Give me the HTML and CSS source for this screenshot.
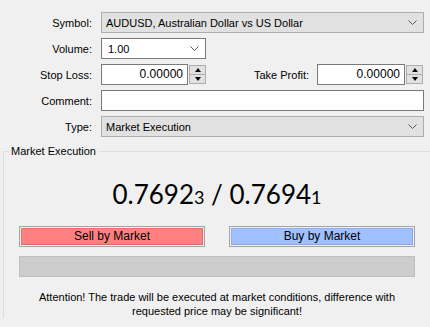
FILE: index.html
```html
<!DOCTYPE html>
<html lang="en">
<head>
  <meta charset="UTF-8">
  <title>Order</title>
  <link rel="stylesheet" href="styles.css">
</head>
<body>
  <form class="order">
    <!-- Campos de la orden -->
    <div class="row">
      <label class="lbl">Symbol:</label>
      <div class="select full">
        <span>AUDUSD, Australian Dollar vs US Dollar</span>
        <svg class="chev" width="9" height="5" viewBox="0 0 9 5"><path d="M0.5 0.5 L4.5 4.5 L8.5 0.5" fill="none" stroke="#555" stroke-width="1"/></svg>
      </div>
    </div>
    <div class="row">
      <label class="lbl">Volume:</label>
      <div class="select white vol">
        <span>1.00</span>
        <svg class="chev" width="9" height="5" viewBox="0 0 9 5"><path d="M0.5 0.5 L4.5 4.5 L8.5 0.5" fill="none" stroke="#555" stroke-width="1"/></svg>
      </div>
    </div>
    <div class="row">
      <label class="lbl">Stop Loss:</label>
      <div class="num sl">
        <div class="field">0.00000</div>
        <div class="spin"><span class="up"></span><span class="down"></span></div>
      </div>
      <label class="lbl tp-lbl">Take Profit:</label>
      <div class="num tp">
        <div class="field">0.00000</div>
        <div class="spin"><span class="up"></span><span class="down"></span></div>
      </div>
    </div>
    <div class="row">
      <label class="lbl">Comment:</label>
      <div class="field text"></div>
    </div>
    <div class="row">
      <label class="lbl">Type:</label>
      <div class="select full">
        <span>Market Execution</span>
        <svg class="chev" width="9" height="5" viewBox="0 0 9 5"><path d="M0.5 0.5 L4.5 4.5 L8.5 0.5" fill="none" stroke="#555" stroke-width="1"/></svg>
      </div>
    </div>

    <!-- Grupo de ejecucion -->
    <fieldset class="group">
      <legend>Market Execution</legend>
      <div class="prices">0.7692<small>3</small> / 0.7694<small>1</small></div>
      <div class="buttons">
        <button type="button" class="btn sell"><span>Sell by Market</span></button>
        <button type="button" class="btn buy"><span>Buy by Market</span></button>
      </div>
      <div class="bar"></div>
      <p class="note">Attention! The trade will be executed at market conditions, difference with<br>requested price may be significant!</p>
    </fieldset>
  </form>
</body>
</html>
```

FILE: styles.css
```css
/* Estilos generales */
body {
  margin: 0;
  background-color: #f0f0f0;
  font-family: "Liberation Sans", Arial, sans-serif;
  font-size: 11px;
  color: #000;
  width: 430px;
  height: 327px;
  overflow: hidden;
}
.order {
  display: flex;
  flex-direction: column;
  padding-top: 12px;
}
.row {
  display: flex;
  align-items: center;
  height: 21px;
  margin-bottom: 5px;
}
.lbl {
  width: 92px;
  text-align: right;
  margin-right: 9px;
  flex-shrink: 0;
}
/* Desplegables */
.select {
  box-sizing: border-box;
  height: 21px;
  display: flex;
  align-items: center;
  justify-content: space-between;
  padding: 0 6px 0 4px;
  border: 1px solid #adadad;
  background-color: #e1e1e1;
}
.select.full {
  width: 323px;
}
.select.white {
  background-color: #fff;
  border-color: #7a7a7a;
  padding-left: 6px;
}
.select.vol {
  width: 105px;
}
.chev {
  display: block;
}
/* Campos numericos */
.field {
  box-sizing: border-box;
  height: 21px;
  background-color: #fff;
  border: 1px solid #7a7a7a;
}
.field.text {
  width: 323px;
}
.num {
  display: flex;
  align-items: center;
}
.num .field {
  text-align: right;
  line-height: 19px;
  padding-right: 4px;
  font-size: 12px;
}
.sl .field {
  width: 87px;
}
.tp .field {
  width: 88px;
}
.spin {
  box-sizing: border-box;
  width: 17px;
  height: 19px;
  margin-left: 1px;
  border: 1px solid #adadad;
  background-color: #e1e1e1;
  display: flex;
  flex-direction: column;
}
.spin span {
  flex: 1;
  display: flex;
  align-items: center;
  justify-content: center;
}
.spin .up {
  border-bottom: 1px solid #adadad;
}
.spin .up::before {
  content: "";
  border-left: 3px solid transparent;
  border-right: 3px solid transparent;
  border-bottom: 4px solid #000;
}
.spin .down::before {
  content: "";
  border-left: 3px solid transparent;
  border-right: 3px solid transparent;
  border-top: 4px solid #000;
}
.tp-lbl {
  width: auto;
  margin-left: auto;
  margin-right: 8px;
}
.tp {
  margin-right: 7px;
}
/* Grupo */
.group {
  margin: 2px 0 0 3px;
  padding: 0 15px;
  border: 1px solid #dcdcdc;
  border-right: none;
  border-bottom: none;
  min-width: 0;
}
.group legend {
  padding: 0 3px 0 2px;
  margin-left: -10px;
  line-height: 15px;
}
.prices {
  text-align: center;
  font-family: Lato, "Liberation Sans", sans-serif;
  font-size: 26px;
  margin-top: 19px;
  height: 32px;
  line-height: 32px;
}
.prices small {
  font-size: 18px;
}
.buttons {
  display: flex;
  justify-content: space-between;
  margin-top: 16px;
}
.btn {
  box-sizing: border-box;
  width: 186px;
  height: 21px;
  padding: 1px;
  border: 1px solid #a5a5a5;
  background-color: #f0f0f0;
  font-family: inherit;
  font-size: 12px;
}
.btn span {
  box-sizing: border-box;
  display: block;
  height: 17px;
  line-height: 15px;
  border: 1px solid;
}
.sell span {
  background-color: #ff8080;
  border-color: #f07070 #e06868 #e06868 #f07070;
}
.buy span {
  background-color: #a0c0ff;
  border-color: #90b0f0 #8aa6e6 #8aa6e6 #90b0f0;
}
.bar {
  box-sizing: border-box;
  height: 21px;
  margin-top: 9px;
  background-color: #cccccc;
  border: 1px solid #bfbfbf;
}
.note {
  margin: 13px 0 0;
  text-align: center;
  line-height: 14px;
}
```
